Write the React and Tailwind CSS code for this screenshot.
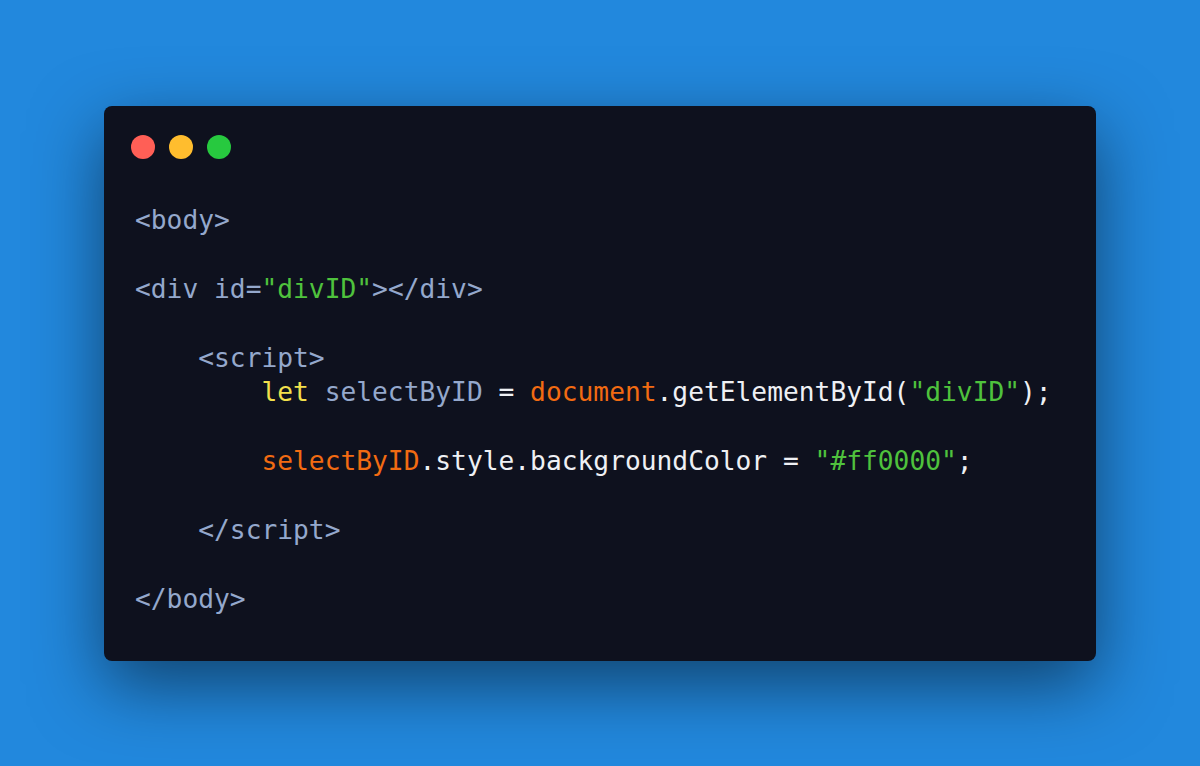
export default function App() {
  const tag = 'text-[#94a8cc]';
  const str = 'text-[#4fc23d]';
  const obj = 'text-[#f26b12]';
  const kw = 'text-[#f2e04c]';
  const plain = 'text-[#eef0f4]';

  return (
    <div className="flex h-screen w-full items-center justify-center bg-[#2288dd]">
      <div className="flex h-[555px] w-[992px] flex-col rounded-lg bg-[#0e111e] px-[27px] pt-[29px] shadow-[0_24px_70px_rgba(0,0,0,0.5)]">
        {/* window controls */}
        <div className="flex gap-[14px]">
          <span className="h-6 w-6 rounded-full bg-[#ff5f56]" />
          <span className="h-6 w-6 rounded-full bg-[#ffbd2e]" />
          <span className="h-6 w-6 rounded-full bg-[#27c93f]" />
        </div>

        <pre className="mt-[44px] pl-1 font-['DejaVu_Sans_Mono',monospace] text-[26.25px] leading-[34.5px]">
          <div className={tag}>{'<body>'}</div>
          <div>{' '}</div>
          <div>
            <span className={tag}>{'<div id='}</span>
            <span className={str}>{'"divID"'}</span>
            <span className={tag}>{'></div>'}</span>
          </div>
          <div>{' '}</div>
          <div className={tag}>{'    <script>'}</div>
          <div>
            <span className={kw}>{'        let'}</span>
            <span className={tag}>{' selectByID '}</span>
            <span className={plain}>{'= '}</span>
            <span className={obj}>document</span>
            <span className={plain}>{'.getElementById('}</span>
            <span className={str}>{'"divID"'}</span>
            <span className={plain}>{');'}</span>
          </div>
          <div>{' '}</div>
          <div>
            <span>{'        '}</span>
            <span className={obj}>selectByID</span>
            <span className={plain}>{'.style.backgroundColor = '}</span>
            <span className={str}>{'"#ff0000"'}</span>
            <span className={plain}>;</span>
          </div>
          <div>{' '}</div>
          <div className={tag}>{'    </script>'}</div>
          <div>{' '}</div>
          <div className={tag}>{'</body>'}</div>
        </pre>
      </div>
    </div>
  );
}
